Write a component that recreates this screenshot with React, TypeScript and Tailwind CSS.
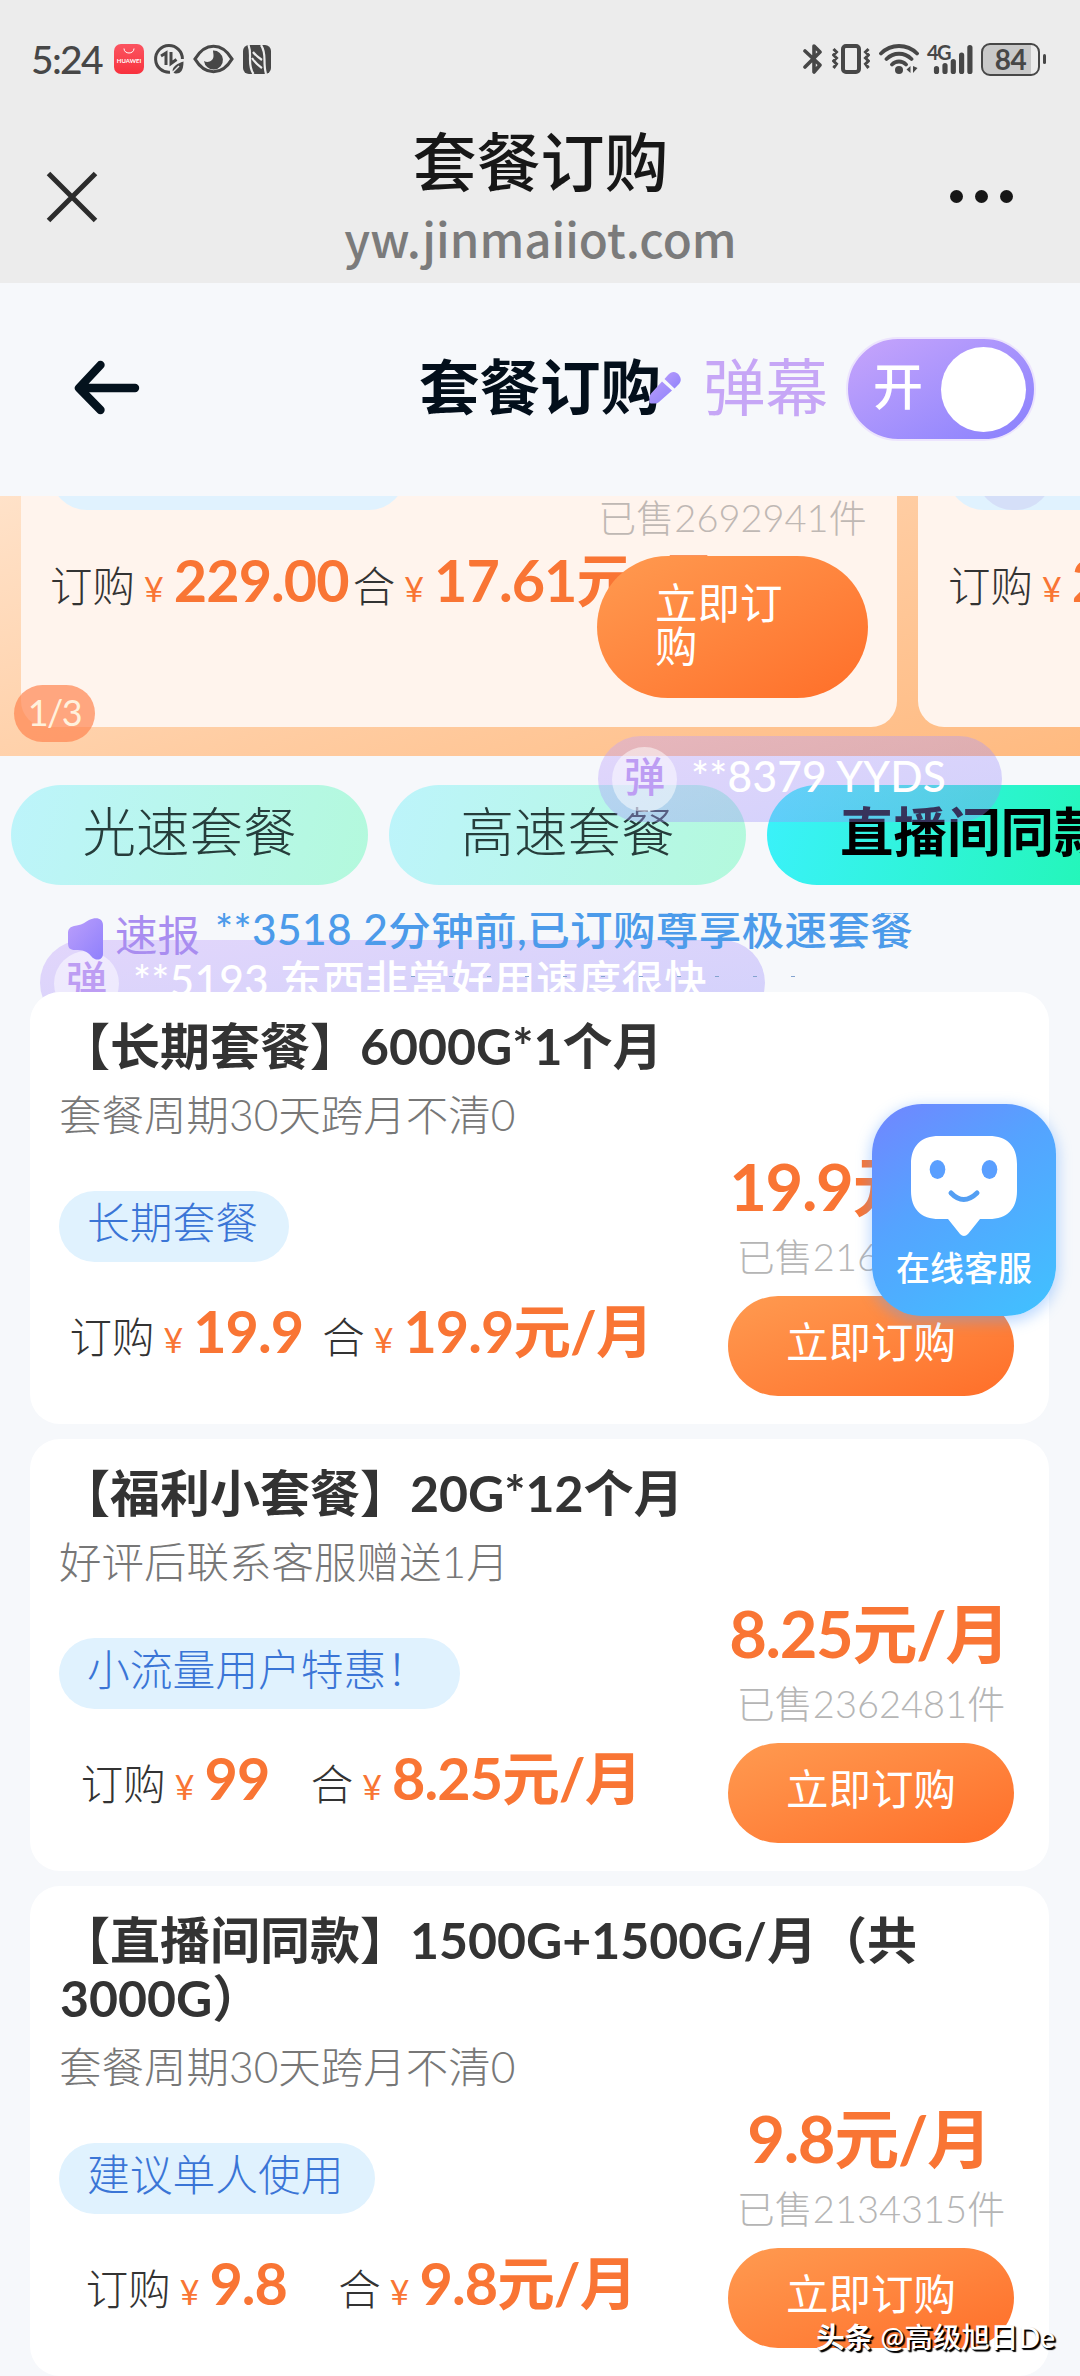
import type { ReactNode } from "react";

type Plan = {
  id: number;
  title: string;
  desc: string;
  tag: string;
  price: string;
  monthly: string;
  sold: string;
};

const plans: Plan[] = [
  {
    id: 1,
    title: "【长期套餐】6000G*1个月",
    desc: "套餐周期30天跨月不清0",
    tag: "长期套餐",
    price: "19.9",
    monthly: "19.9元/月",
    sold: "已售2165127件",
  },
  {
    id: 2,
    title: "【福利小套餐】20G*12个月",
    desc: "好评后联系客服赠送1月",
    tag: "小流量用户特惠！",
    price: "99",
    monthly: "8.25元/月",
    sold: "已售2362481件",
  },
  {
    id: 3,
    title: "【直播间同款】1500G+1500G/月（共3000G）",
    desc: "套餐周期30天跨月不清0",
    tag: "建议单人使用",
    price: "9.8",
    monthly: "9.8元/月",
    sold: "已售2134315件",
  },
];

function StatusBar() {
  return (
    <div className="flex h-[90px] items-start justify-between pl-[31px] pr-[34px] pt-[43px] text-[#474747]">
      <div className="flex h-8 items-center">
        <span className="w-[83px] text-[39px] font-medium leading-8 tracking-[-1.7px]">5:24</span>
        <div className="flex h-[30px] w-[30px] flex-col items-center rounded-[7px] bg-gradient-to-b from-[#fb5360] to-[#f8303d]">
          <svg width="12" height="6" viewBox="0 0 12 6" className="mt-1" fill="none" stroke="#fff" strokeWidth="1">
            <path d="M1 0.5c0 6 10 6 10 0" />
          </svg>
          <span className="mt-[3px] text-[6px] font-bold leading-[7px] text-white">HUAWEI</span>
        </div>
        <svg width="32" height="32" viewBox="0 0 32 32" className="ml-[9px]" fill="none" stroke="currentColor" strokeWidth="3">
          <path d="M17 29.3A13.4 13.4 0 1 1 29.4 16" />
          <path d="M8 13l5-3V22M18 9v11.500l5.500-4" strokeWidth="3" />
          <path d="M30.500 18.500c0 9-3 12-7 12-6 0-6-8 7-12Z" fill="currentColor" stroke="none" />
          <path d="M18 31l8-8" stroke="#ececec" strokeWidth="1.400" />
        </svg>
        <svg width="41" height="30" viewBox="0 0 41 30" className="ml-2" fill="none" stroke="currentColor" strokeWidth="3.200">
          <path d="M2 15C12-2 29-2 39 15 29 32 12 32 2 15Z" />
          <path d="M20 6.500a9.500 9.500 0 1 1-9 10.500c4 2.500 9.500 0 9.500-5 0-2.500-.5-4-.5-5.500Z" fill="currentColor" stroke="none" />
        </svg>
        <svg width="28" height="29" viewBox="0 0 28 29" className="ml-[9px]">
          <rect width="28" height="29" rx="6" fill="currentColor" />
          <g stroke="#ececec" strokeWidth="2.200" fill="none">
            <path d="M5.500 0c2 5 1.500 9 1.500 14s0 10 3.500 15M18 0c3.500 5 3.500 10 3.500 15s0 9 1.500 14" />
            <path d="M10 7c3 4 6 6 9 8M9 13c3 5 6 7 10 10" />
          </g>
        </svg>
      </div>
      <div className="flex h-8 items-center">
        <svg width="20" height="30" viewBox="0 0 20 30" fill="none" stroke="currentColor" strokeWidth="3.600" strokeLinejoin="round" strokeLinecap="round">
          <path d="M2 7l15 14-6 7V2l6 6L2 23" />
        </svg>
        <svg width="38" height="30" viewBox="0 0 38 30" className="ml-[9px]" fill="none" stroke="currentColor" strokeWidth="3">
          <rect x="11" y="2" width="16" height="26" rx="3" strokeWidth="4" />
          <path d="M1.500 5l3 3-3 3 3 3-3 3 3 3-3 4M36.500 5l-3 3 3 3-3 3 3 3-3 3 3 4" />
        </svg>
        <svg width="40" height="30" viewBox="0 0 40 30" className="ml-[9px]" fill="none" stroke="currentColor" strokeWidth="3.800" strokeLinecap="round">
          <path d="M2 9.500c10-10 26-10 36 0M7.500 15c7-7 18-7 25 0M13 20.500c4-4 10-4 14 0" />
          <circle cx="20" cy="26" r="4" fill="currentColor" stroke="none" />
          <path d="M31.500 22v7l-4-3.500ZM34 22v7l4.500-5Z" fill="currentColor" stroke="none" />
        </svg>
        <div className="relative ml-2 h-[31px] w-[46px]">
          <span className="absolute left-0 top-0 text-[20px] font-bold leading-4 tracking-[-1.5px]">4G</span>
          <svg width="46" height="31" viewBox="0 0 46 31" fill="none" stroke="currentColor" strokeWidth="5.200" strokeLinecap="round">
            <path d="M9.500 24.500v3M18 21.500v6M26.300 17.500v10M34.600 11v16.500M42.900 3.500v24" />
          </svg>
        </div>
        <div className="ml-[8px] flex h-[33px] w-[59px] items-center justify-center rounded-[9px] border-2 border-[#474747] bg-[linear-gradient(90deg,#c9c9c9_88%,#ececec_88%)]">
          <span className="text-[28px] font-bold leading-none tracking-[-0.5px]">84</span>
        </div>
        <span className="ml-[3px] h-2.5 w-[3px] rounded bg-[#474747]" />
      </div>
    </div>
  );
}

function BrowserBar() {
  return (
    <div className="flex h-[193px] items-center justify-between pl-[46px] pr-[67px]">
      <svg width="52" height="52" viewBox="0 0 52 52" className="mt-5" stroke="#2c2c2c" strokeWidth="5">
        <path d="M2.500 2.500l47 47M49.500 2.500l-47 47" />
      </svg>
      <div className="-mr-[33px] flex h-full flex-col items-center pt-[40px]">
        <h1 className="text-[64px] font-medium leading-none text-[#171717]">套餐订购</h1>
        <p className="mt-[16px] font-['Noto_Sans_CJK_SC'] text-[47.500px] font-medium leading-[56px] text-[#7b7b7b]">yw.jinmaiiot.com</p>
      </div>
      <div className="mt-5 flex gap-3">
        <span className="h-[13px] w-[13px] rounded-full bg-[#171717]" />
        <span className="h-[13px] w-[13px] rounded-full bg-[#171717]" />
        <span className="h-[13px] w-[13px] rounded-full bg-[#171717]" />
      </div>
    </div>
  );
}

function PageNav() {
  return (
    <div className="relative flex h-[213px] items-center justify-center">
      <svg width="66" height="56" viewBox="0 0 66 56" className="absolute left-[74px] top-[77px]" fill="none" stroke="#04121d" strokeWidth="8.400" strokeLinecap="round" strokeLinejoin="round">
        <path d="M26.500 5L5 28l21.500 22M6 28h55" />
      </svg>
      <h2 className="pb-[5px] text-[60.500px] font-bold leading-none text-[#030f1b]">套餐订购</h2>
      <div className="absolute left-[649px] top-[54px] flex h-[104px] items-center">
        <svg width="32" height="34" viewBox="0 0 32 34" className="-mt-0.5">
          <defs>
            <linearGradient id="pen" x1="0" y1="0" x2="1" y2="1">
              <stop offset="0" stopColor="#b79bfb" />
              <stop offset="1" stopColor="#9083fb" />
            </linearGradient>
          </defs>
          <path d="M13 10.500l10 9L10 31c-2 2-5 1.500-8 1.500-2 0-1.500-3-1.500-5 0-2 .5-4 2-5.500Z" fill="url(#pen)" />
          <path d="M15.500 8l3.500-4c4-5 9-3 11 0s3 6-1 10l-3.500 3.500Z" fill="url(#pen)" />
        </svg>
        <span className="ml-[22px] pb-1 text-[62.500px] leading-none text-[#c6a6f6]">弹幕</span>
        <div className="ml-[18px] flex h-[104px] w-[190px] items-center justify-between rounded-full border-2 border-[#ece4fd] bg-gradient-to-br from-[#c8a5fb] to-[#8880fd] bg-origin-border pl-[25px] pr-[8px]">
          <span className="pb-[7px] text-[50px] font-medium leading-none text-white">开</span>
          <span className="h-[85px] w-[85px] rounded-full bg-white" />
        </div>
      </div>
    </div>
  );
}

function Price({ label, value }: { label: string; value: string }) {
  return (
    <span className="flex items-baseline whitespace-nowrap leading-[58px]">
      <span className="text-[42.500px] font-light text-[#333]">{label}</span>
      <span className="ml-[9px] mr-[10px] text-[34px] text-[#f97534]">¥</span>
      <span className="text-[57.500px] font-bold tracking-[-0.9px] text-[#f97534]">{value}</span>
    </span>
  );
}

function Carousel() {
  return (
    <div className="relative flex h-[260px] gap-[21px] overflow-hidden bg-[linear-gradient(160deg,#ffe2c9_0%,#ffcda3_50%,#ffba80_100%)] pl-[21px]">
      <div className="flex h-[231px] w-[876px] shrink-0 rounded-b-[26px] bg-[#fff4ed] pl-[30px]">
        <div className="w-[546px]">
          <div className="-mt-[57px] h-[71px] w-[354px] rounded-full bg-[#e0f2fe]" />
          <div className="-ml-px mt-[41px] flex gap-1">
            <Price label="订购" value="229.00" />
            <Price label="合" value="17.61元/月" />
          </div>
        </div>
        <div className="z-10 flex w-[271px] shrink-0 flex-col items-center pt-[3px]">
          <span className="whitespace-nowrap text-[38px] font-light leading-[37px] text-[#bfb8b4]">已售2692941件</span>
          <button className="mt-5 h-[142px] w-[271px] rounded-full bg-gradient-to-br from-[#ff9a50] to-[#ff6e28] pb-1.5 pl-[58px] pr-[83px] text-left text-[42.500px] leading-[43px] text-white">
            立即订购
          </button>
        </div>
      </div>
      <div className="h-[231px] w-[876px] shrink-0 rounded-b-[26px] bg-[#fff4ed] pl-[30px]">
        <div className="-mt-[57px] flex h-[71px] w-[354px] items-end rounded-full bg-[#e0f2fe] pl-[29px]">
          <span className="h-[71px] w-[75px] rounded-full bg-[#d5dff8]" />
        </div>
        <div className="mt-[41px] flex">
          <Price label="订购" value="229.00" />
        </div>
      </div>
      <span className="absolute bottom-[14px] left-[14px] flex h-[57px] w-[81px] items-center justify-center rounded-full bg-[#ff8450]/70 pb-1 text-[36px] leading-none tracking-[-1.5px] text-[#fff1dc]">
        1/3
      </span>
    </div>
  );
}

function Tabs() {
  return (
    <div className="flex h-[129px] gap-[21px] overflow-hidden pl-[11px] pt-[29px]">
      {["光速套餐", "高速套餐"].map((name) => (
        <button
          key={name}
          className="h-[100px] w-[357px] shrink-0 rounded-full bg-[linear-gradient(105deg,#bdf4fb,#b3f9dc)] pb-1.5 text-[53.500px] font-light leading-none text-[#263d3b]"
        >
          {name}
        </button>
      ))}
      <button className="h-[100px] w-[420px] shrink-0 rounded-full bg-[linear-gradient(105deg,#3bf1fb,#1df8a6)] pb-1.5 pl-[73px] text-left text-[53.500px] font-bold leading-none text-black">
        直播间同款
      </button>
    </div>
  );
}

function Ticker() {
  return (
    <div className="relative z-20 flex h-[107px] items-start pl-[67px] pt-[28px]">
      <svg width="36" height="42" viewBox="0 0 36 42" className="mt-[5px]">
        <defs>
          <linearGradient id="horn" x1="0" y1="0" x2="1" y2="1">
            <stop offset="0" stopColor="#bb9ffb" />
            <stop offset="1" stopColor="#8f80fc" />
          </linearGradient>
        </defs>
        <path d="M1 15c0-4 2-6 6-7 8-1 10-3 15-6 8-4 14-1 14 5v29c0 6-7 8-12 2-4-5-8-6-16-6-5 0-7-2-7-7Z" fill="url(#horn)" />
      </svg>
      <span className="ml-[12px] mt-px text-[42.500px] leading-none text-[#a98df0]">速报</span>
      <div className="ml-[15px] h-[64px] overflow-hidden">
        <p className="-mt-[5px] whitespace-nowrap text-[42.500px] font-medium leading-none tracking-[0.4px] text-[#4c9bea]">
          **3518 2分钟前,已订购尊享极速套餐
        </p>
        <div className="ml-[196px] mt-[25px] flex gap-[34px]">
          {[1, 2, 3, 4, 5, 6, 7, 8, 9, 10, 11].map((n) => (
            <span key={n} className="h-px w-[4px] bg-[#83a3cf]" />
          ))}
        </div>
      </div>
    </div>
  );
}

function Bullet({ children, className }: { children: ReactNode; className: string }) {
  return (
    <div
      className={`absolute flex h-[86px] items-center rounded-full bg-gradient-to-br from-[#c4a3fb]/40 to-[#8e88fc]/35 pl-[14px] text-[42.500px] leading-none ${className}`}
    >
      <span className="flex h-[65px] w-[65px] items-center justify-center rounded-full bg-white/50 pb-1.5 text-[41px] font-medium text-[#bd9df3]">
        弹
      </span>
      <span className="ml-[14px] whitespace-nowrap pb-1.5 font-medium tracking-[0.2px] text-white">{children}</span>
    </div>
  );
}

function PlanCard({ plan }: { plan: Plan }) {
  return (
    <div className="rounded-[30px] bg-white pl-[30px] pr-[36px] pt-[25px]">
      <h3 className="w-[900px] text-[50px] font-bold leading-[58px] text-[#333]">{plan.title}</h3>
      <p className="-ml-px mt-[18px] text-[42.500px] font-light leading-[43px] text-[#777]">{plan.desc}</p>
      <div className="flex justify-between">
        <div className="w-[602px] pt-[55px]">
          <span className="-ml-px flex h-[71px] w-fit items-center rounded-full bg-[#e0f2fe] pl-[28px] pr-[31px] pb-1.5 text-[42.750px] font-light leading-none text-[#3a75d6]">
            {plan.tag}
          </span>
          <div className="mt-[40px] flex justify-around">
            <Price label="订购" value={plan.price} />
            <Price label="合" value={plan.monthly} />
          </div>
        </div>
        <div className="-mr-px flex w-[286px] flex-col items-center pb-[28px] pt-[18px]">
          <span className="whitespace-nowrap pr-1 text-[65px] font-bold leading-[64px] tracking-[-1.3px] text-[#f97534]">{plan.monthly}</span>
          <span className="mt-[20px] whitespace-nowrap text-[38px] font-light leading-[37px] text-[#b5b5b5]">{plan.sold}</span>
          <button className="mt-[21px] h-[100px] w-[286px] rounded-full bg-gradient-to-br from-[#ff9a50] to-[#ff6e28] pb-2 text-[42.500px] leading-none text-white">
            立即订购
          </button>
        </div>
      </div>
    </div>
  );
}

function ServiceButton() {
  return (
    <div className="absolute left-[872px] top-[1104px] z-30 flex h-[212px] w-[184px] flex-col items-center rounded-[50px] bg-[linear-gradient(145deg,#6c8bff_8%,#55a3ff_40%,#40c2ff_100%)] pt-[32px] shadow-[0_4px_14px_2px_rgba(90,160,255,0.4)]">
      <svg width="106" height="101" viewBox="0 0 106 101">
        <path d="M28 0h50c18 0 28 10 28 28v27c0 18-10 28-28 28h-9L57 98q-4 4-8 0L37 83h-9C10 83 0 73 0 55V28C0 10 10 0 28 0Z" fill="#fff" />
        <ellipse cx="26.500" cy="33.500" rx="7.800" ry="9.500" fill="#5a9fff" />
        <ellipse cx="78.500" cy="33.500" rx="7.800" ry="9.500" fill="#5a9fff" />
        <path d="M40 57q12.500 13 26 0" fill="none" stroke="#549ff3" strokeWidth="5" strokeLinecap="round" />
      </svg>
      <span className="mt-[14px] text-[34px] font-medium leading-none text-white">在线客服</span>
    </div>
  );
}

export default function App() {
  return (
    <div className="relative h-[2376px] w-[1080px] overflow-hidden bg-[#f6f8fb] font-['Lato','Noto_Sans_CJK_SC',sans-serif]">
      <div className="bg-[#ececec]">
        <StatusBar />
        <BrowserBar />
      </div>
      <PageNav />
      <Carousel />
      <Tabs />
      <Ticker />
      <div className="relative z-20 ml-[30px] flex w-[1019px] flex-col gap-[15px]">
        {plans.map((plan) => (
          <PlanCard key={plan.id} plan={plan} />
        ))}
      </div>

      {/* scrolling comments */}
      <Bullet className="left-[598px] top-[736px] z-10 w-[404px]">**8379 YYDS</Bullet>
      <Bullet className="left-[40px] top-[940px] z-10 w-[725px]">**5193 东西非常好用速度很快</Bullet>

      <ServiceButton />
      <div className="absolute right-[25px] top-[2322px] z-30 whitespace-nowrap text-[28.500px] font-medium leading-[30px] text-white [text-shadow:1px_1px_1px_#000,2px_2px_1px_#000]">
        <span className="font-bold">头条</span> @高级旭日De
      </div>
    </div>
  );
}
